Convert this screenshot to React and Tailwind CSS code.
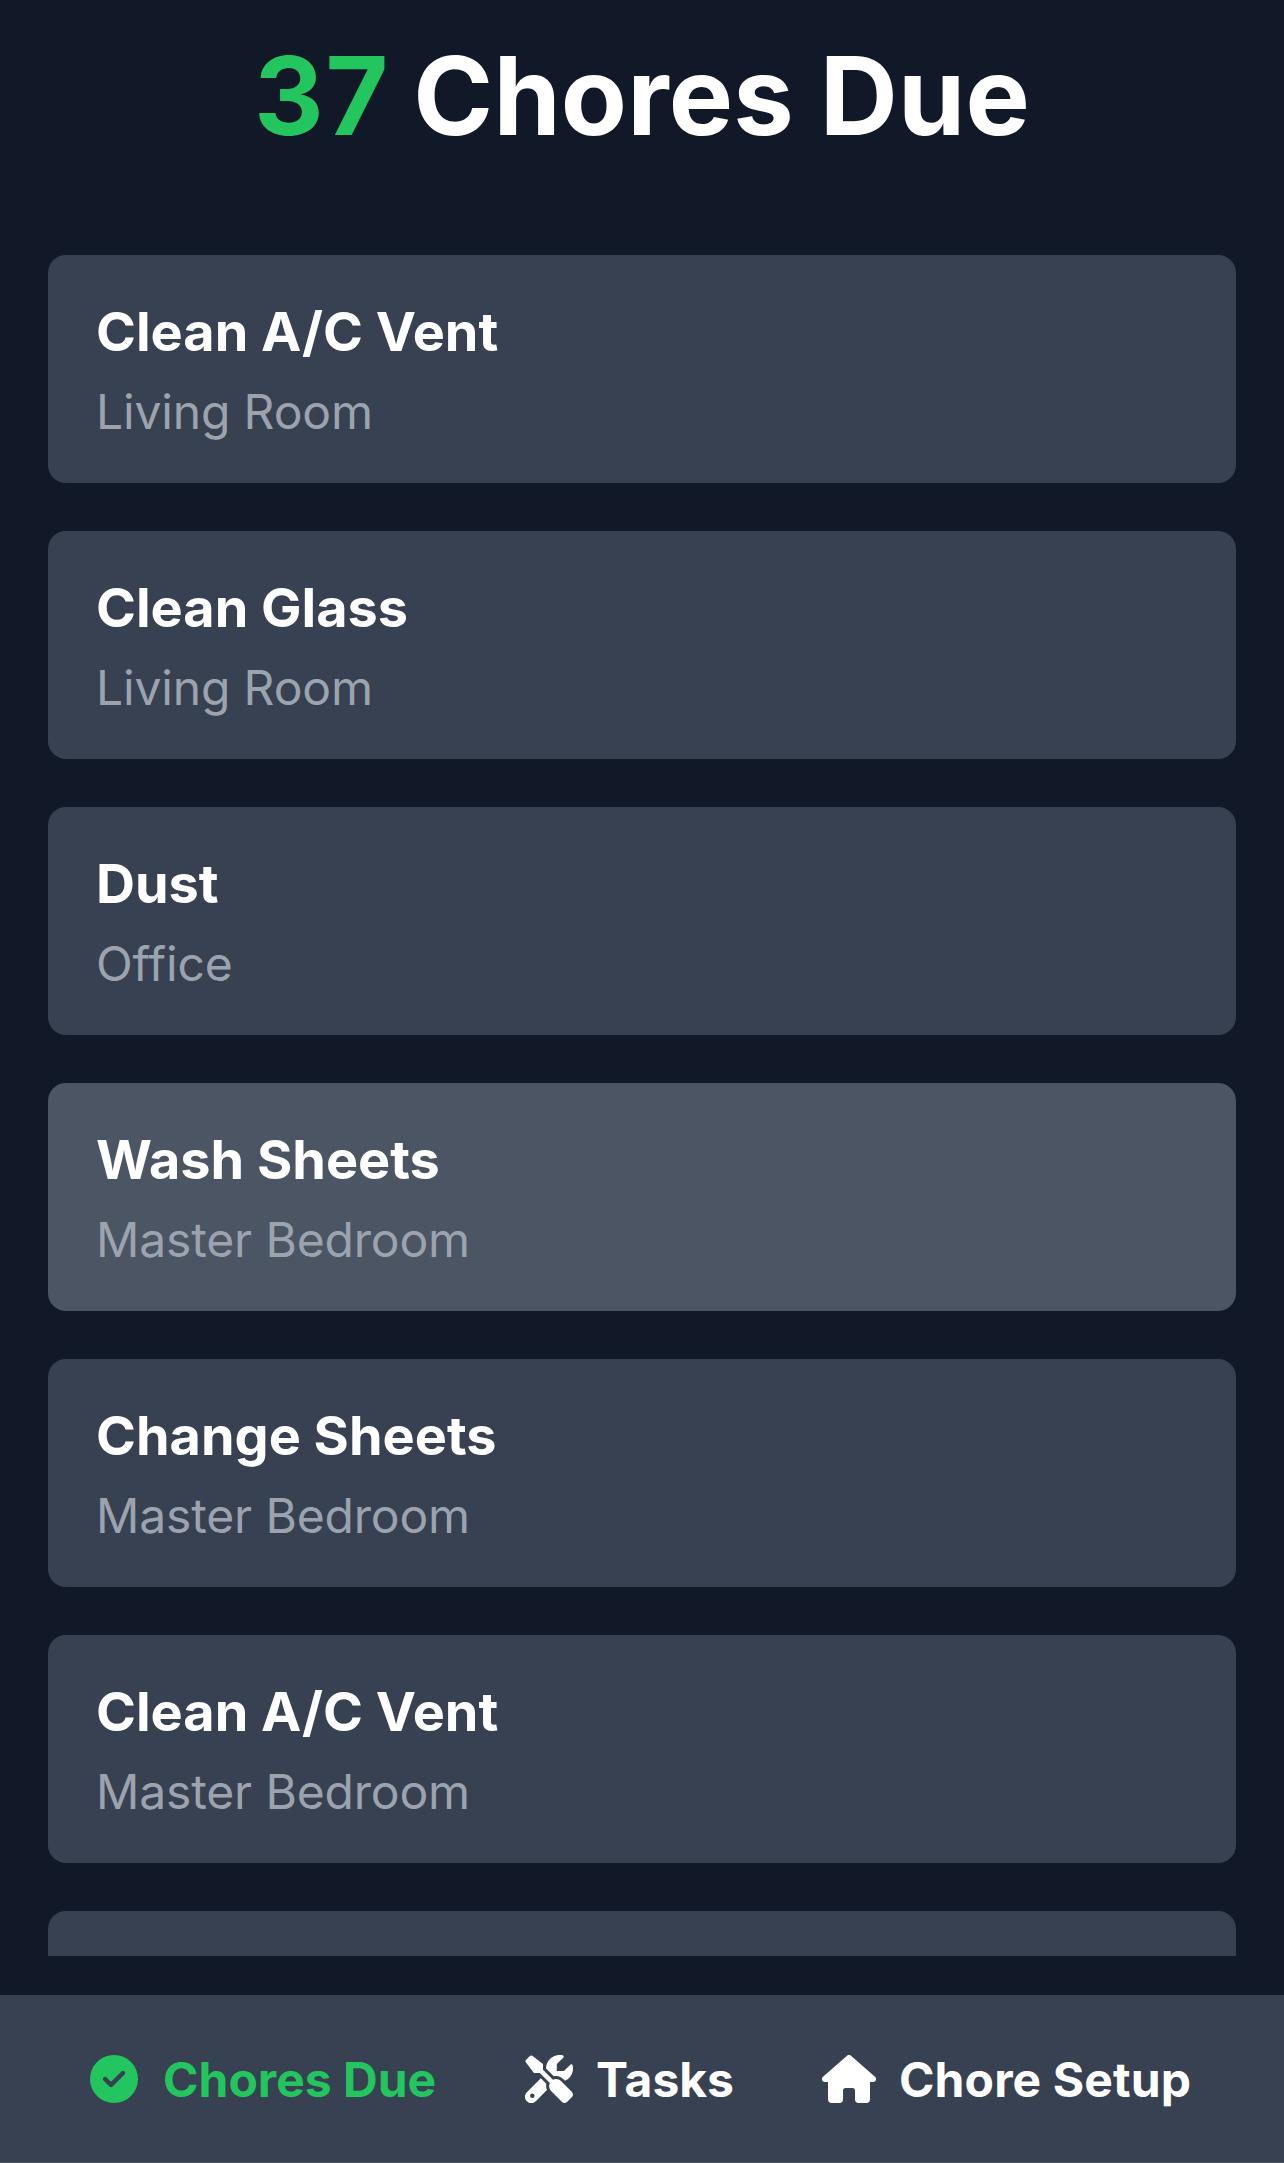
import { FaCircleCheck } from "react-icons/fa6";

const chores = [
  { name: "Clean A/C Vent", room: "Living Room" },
  { name: "Clean Glass", room: "Living Room" },
  { name: "Dust", room: "Office" },
  { name: "Wash Sheets", room: "Master Bedroom", active: true },
  { name: "Change Sheets", room: "Master Bedroom" },
  { name: "Clean A/C Vent", room: "Master Bedroom" },
];

function House() {
  return (
    <svg viewBox="0 0 54 48" className="h-12 w-[54px]" fill="currentColor">
      <path d="M25 .8a3 3 0 0 1 4 0L53 21.8c1.1 1 1.3 2.2.8 3.4-.4 1.2-1.5 1.8-2.800 1.800h-3v17.500c0 2-1.500 3.500-3.500 3.500h-8c-2 0-3.500-1.500-3.500-3.500v-9c0-1.500-1-2.500-2.500-2.500h-7c-1.500 0-2.500 1-2.500 2.500v9c0 2-1.500 3.500-3.500 3.500h-8C7.500 48 6 46.500 6 44.500V27H3C1.700 27 .6 26.400.2 25.200c-.5-1.200-.3-2.400.8-3.400z" />
    </svg>
  );
}

function Tools() {
  return (
    <svg viewBox="0 0 512 512" className="h-12 w-12" fill="currentColor">
      <path d="M331.8 224.1c28.29 0 54.88 10.99 74.86 30.97l19.59 19.59c40.01-17.74 71.25-53.3 81.62-96.65 5.725-23.92 5.34-47.08.2148-68.4-2.613-10.88-16.43-14.51-24.34-6.604l-68.9 68.9h-75.6V97.2l68.9-68.9c7.912-7.912 4.275-21.73-6.604-24.34-21.32-5.125-44.48-5.51-68.4.2148-55.3 13.23-98.39 60.22-107.2 116.4C224.5 128.9 224.2 137 224.3 145l82.78 82.86C315.2 225.1 323.5 224.1 331.8 224.1z" />
      <path d="M384 278.6c-23.16-23.16-57.57-27.57-85.39-13.9L192 158V96L78 9q-14-10-26 2L10 53q-11 11-2 23l88 115h62l106.7 106.6c-13.67 27.82-9.251 62.23 13.91 85.39l117 117.1c14.62 14.5 38.21 14.5 52.71 0l52.75-52.75c14.5-14.5 14.5-38.08 0-52.71L384 278.6z" />
      <path fillRule="evenodd" d="M227.9 307L168.7 247.9l-148.9 148.9c-26.37 26.37-26.37 69.08 0 95.45C32.96 505.4 50.21 512 67.5 512s34.54-6.592 47.72-19.77l119.1-119.1C225.5 352.3 222.6 329.4 227.9 307zM78 458a24 24 0 1 1 0-48 24 24 0 0 1 0 48z" />
    </svg>
  );
}

function Chore({ name, room, active }) {
  return (
    <div className={`h-[228px] shrink-0 rounded-[18px] px-12 pt-[47px] ${active ? "bg-[#4b5563]" : "bg-[#374151]"}`}>
      <div className="text-[54px] leading-[60px] font-bold text-white">{name}</div>
      <div className="mt-[14px] text-[48px] leading-[72px] font-normal tracking-[-0.15px] text-[#9ca3af]">{room}</div>
    </div>
  );
}

export default function App() {
  return (
    <div className="flex h-[2163px] w-[1284px] flex-col overflow-hidden bg-[#111827] font-['Inter',sans-serif]">
      <h1 className="mt-[42px] text-center text-[108px] leading-[108px] font-bold tracking-[0.2px] text-white">
        <span className="-mr-[2.4px] tracking-[1.7px] text-[#22c55e]">37</span> Chores Due
      </h1>
      <main className="mx-12 mt-[105px] flex h-[1701px] shrink-0 flex-col gap-12 overflow-hidden">
        {chores.map((chore) => (
          <Chore key={chore.name + chore.room} {...chore} />
        ))}
        <div className="h-[228px] shrink-0 rounded-[18px] bg-[#374151]" />
      </main>
      <nav className="mt-auto grid h-[168px] shrink-0 grid-cols-[435px_297px_1fr] items-center border-b border-[#4b5563] bg-[#374151] pt-px pl-[90px] text-[48px] font-bold whitespace-nowrap text-white">
        <a className="flex items-center gap-[25px] text-[#22c55e]"><FaCircleCheck className="h-12 w-12" /><span className="pt-[2px]">Chores Due</span></a>
        <a className="flex items-center gap-[23px]"><Tools /><span className="pt-[2px]">Tasks</span></a>
        <a className="flex items-center gap-[23px]"><House /><span className="pt-[2px] tracking-[0.1px]">Chore Setup</span></a>
      </nav>
    </div>
  );
}
